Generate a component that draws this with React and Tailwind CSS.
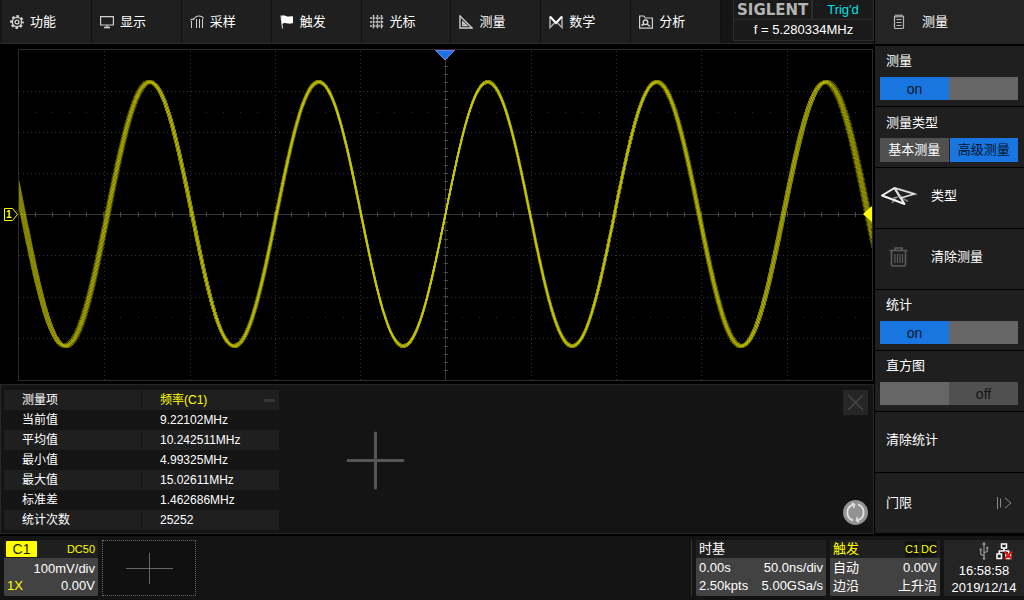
import { useState } from "react";
import { Usb } from "lucide-react";
import clsx from "clsx";

const navItems = [
  { label: "功能", icon: GearIcon },
  { label: "显示", icon: MonitorIcon },
  { label: "采样", icon: SampleIcon },
  { label: "触发", icon: FlagIcon },
  { label: "光标", icon: CursorGridIcon },
  { label: "测量", icon: SetSquareIcon },
  { label: "数学", icon: MathIcon },
  { label: "分析", icon: AnalysisIcon }
];

const stats = [
  { label: "当前值", value: "9.22102MHz" },
  { label: "平均值", value: "10.242511MHz" },
  { label: "最小值", value: "4.99325MHz" },
  { label: "最大值", value: "15.02611MHz" },
  { label: "标准差", value: "1.462686MHz" },
  { label: "统计次数", value: "25252" }
];

// plot geometry, in viewBox units
const plot = { left: 18, right: 872, top: 5, bottom: 336, cx: 445, cy: 170 };
const wave = { period: 169, amplitude: 132 };
const jitter = [-1, -0.75, -0.5, -0.25, 0, 0.25, 0.5, 0.75, 1];
const columns = [104, 190, 275, 360, 531, 616, 701, 787];
const rows = [47, 88, 129, 211, 253, 294];

// every pass drifts a little in time and carries some vertical noise
function wavePath(spread, index) {
  const noise = ((index % 3) - 1) * 1.2;
  const points = [];
  for (let x = plot.left; x <= plot.right; x += 1) {
    const phase = ((x - plot.cx - 0.5) * (1 + spread * 0.0062) * 2 * Math.PI) / wave.period;
    points.push(`${x},${(plot.cy + noise - wave.amplitude * Math.sin(phase)).toFixed(1)}`);
  }
  return `M${points.join("L")}`;
}

const wavePaths = jitter.map(wavePath);

export default function App() {
  return (
    <div lang="zh-CN" className="flex min-h-screen flex-col bg-black font-['Liberation_Sans','Noto_Sans_CJK_SC',sans-serif] text-[13px] leading-4 text-white">
      <div className="flex">
        <main className="min-w-0 flex-1">
          <TopBar />
          <Waveform />
          <StatsPanel />
        </main>
        <Sidebar />
      </div>
      <StatusBar />
    </div>
  );
}

function TopBar() {
  return (
    <header className="flex h-11 border-b border-[#2b2b2b] bg-[#151515] pl-0.5">
      <nav className="flex flex-1">
        {navItems.map((item) => {
          const Icon = item.icon;
          return (
            <button key={item.label} type="button" className="flex flex-1 items-center gap-1.5 border-r border-[#111111] bg-[#1f1f1f] pl-2">
              <Icon />
              <span>{item.label}</span>
            </button>
          );
        })}
      </nav>
      <div className="ml-3 h-[41px] w-[141px] border border-t-0 border-[#2d2d2d] bg-[#1a1a1a]">
        <div className="flex h-5 border-b border-[#2d2d2d]">
          <div className="flex w-[79px] items-center border-r-2 border-[#2d2d2d] pl-[3px] font-['DejaVu_Sans',sans-serif] text-[15px] font-bold text-[#b4b4b4]">SIGLENT</div>
          <div className="flex flex-1 items-center justify-center text-[#00e5e5]">Trig'd</div>
        </div>
        <div className="flex h-5 items-center justify-center">f = 5.280334MHz</div>
      </div>
    </header>
  );
}

function Waveform() {
  const hTicks = Array.from({ length: 49 }, (_, i) => Math.round(plot.cx + (i - 24) * 17.08));
  const vTicks = Array.from({ length: 39 }, (_, i) => Math.round(plot.cy + (i - 19) * 8.23));
  return (
    <svg viewBox="0 0 874 340" className="block h-auto w-full" role="img" aria-label="C1 波形">
      <defs>
        <clipPath id="plot-area">
          <rect x="19" y="6" width="853" height="330" />
        </clipPath>
      </defs>
      <g shapeRendering="crispEdges" fill="none" stroke="#343434">
        <rect x="18.5" y="5.5" width="854" height="331" stroke="#2c2c2c" />
        {columns.map((x) => (
          <line key={x} x1={x + 0.5} x2={x + 0.5} y1="7" y2="336" strokeDasharray="1 3" />
        ))}
        {rows.map((y) => (
          <line key={y} x1="19" x2="870" y1={y + 0.5} y2={y + 0.5} strokeDasharray="1 3" />
        ))}
        <path d="M19 170.5H872M445.5 6V336" />
        {hTicks.map((x) => (
          <path key={x} d={`M${x + 0.5} 168v5`} stroke="#484848" />
        ))}
        {vTicks.map((y) => (
          <path key={y} d={`M444 ${y + 0.5}h4`} stroke="#484848" />
        ))}
        {hTicks.map((x) => (
          <path key={x} d={`M${x} 68.5h1M${x} 273.5h1`} stroke="#2c2c2c" />
        ))}
      </g>
      <g clipPath="url(#plot-area)" fill="none" stroke="#d8d800" strokeWidth="2" strokeOpacity="0.27" shapeRendering="crispEdges">
        {wavePaths.map((d, index) => (
          <path key={jitter[index]} d={d} />
        ))}
      </g>
      <path d="M435.5 6.5h19l-9.500 9.500z" fill="#1976e0" stroke="#8074e8" />
      <path d="M863 170l9-8v16z" fill="#ffff00" />
      <path d="M4.500 164.500h8l5 6-5 6h-8z" fill="#000000" stroke="#ffff00" />
      <text x="6" y="174" fill="#ffff00" fontSize="10" fontWeight="bold">1</text>
    </svg>
  );
}

function StatsPanel() {
  return (
    <section className="flex h-[150px] border border-[#272727] bg-[#141414] pt-[5px] pr-[5px] pl-[3px]">
      <table className="h-[140px] w-[275px] table-fixed border-collapse text-left text-[12px]">
        <thead>
          <tr className="h-5 bg-[#1f1f1f]">
            <th scope="col" className="border-r border-[#141414] p-0 pl-[18px] font-normal">测量项</th>
            <th scope="col" className="p-0 pl-[18px] font-normal text-[#ffff00]">
              <div className="flex items-center justify-between">
                频率(C1)
                <button type="button" aria-label="移除 频率(C1)" className="mr-1 h-[3px] w-[11px] rounded-full bg-[#383838]" />
              </div>
            </th>
          </tr>
        </thead>
        <tbody>
          {stats.map((item) => (
            <tr key={item.label} className="h-5 even:bg-[#1f1f1f]">
              <th scope="row" className="border-r border-[#141414] p-0 pl-[18px] font-normal">{item.label}</th>
              <td className="p-0 pl-[18px]">{item.value}</td>
            </tr>
          ))}
        </tbody>
      </table>
      <button type="button" aria-label="添加测量项" className="ml-[66px] self-center pb-1">
        <svg width="60" height="60" viewBox="0 0 60 60" fill="none" stroke="#555555" strokeWidth="3" strokeLinecap="round">
          <path d="M3 30.500h55M30.500 3v55" />
        </svg>
      </button>
      <div className="ml-auto flex flex-col items-center justify-between pb-2">
        <button type="button" aria-label="关闭" className="grid h-[25px] w-[25px] place-items-center bg-[#262626]">
          <svg width="17" height="17" viewBox="0 0 17 17" stroke="#464646" strokeWidth="1.500">
            <path d="M1 1l15 15M16 1L1 16" />
          </svg>
        </button>
        <button type="button" aria-label="重新统计" className="grid h-[25px] w-[25px] place-items-center rounded-full bg-[#929292]">
          <svg width="21" height="21" viewBox="0 0 21 21" fill="none" stroke="#e2e2e2" strokeWidth="1.800">
            <path d="M8 18.300A8.200 8.200 0 0 1 8.500 2.600M13 2.700A8.200 8.200 0 0 1 12.500 18.400" />
            <path d="M7 0.800l2.500 1.800L8.500 6M14 20.200l-2.500-1.800L12.500 15" strokeWidth="1.500" />
          </svg>
        </button>
      </div>
    </section>
  );
}

function Sidebar() {
  const [type, setType] = useState("高级测量");
  return (
    <aside className="w-[150px] shrink-0 border-l border-black bg-[#1f1f1f]">
      <h2 className="flex h-[46px] items-center gap-4 border-b-2 border-black bg-[#242424] pl-[17px]">
        <NotepadIcon />
        测量
      </h2>
      <Switch label="测量" defaultChecked />
      <fieldset className="h-[61px] border-b border-black pt-1.5 pr-1.5 pl-[5px]">
        <legend className="float-left w-full pl-1.5 leading-5">测量类型</legend>
        <div className="flex w-full gap-px pt-[5px]">
          {["基本测量", "高级测量"].map((name) => (
            <label key={name} className={clsx("relative grid h-6 flex-1 place-items-center", type === name ? "bg-[#1976e0] text-[#04152b]" : "bg-[#505050]")}>
              <input type="radio" name="measure-type" className="sr-only" checked={type === name} onChange={() => setType(name)} />
              {name}
            </label>
          ))}
        </div>
      </fieldset>
      <button type="button" className="flex h-[61px] w-full items-center border-b border-black pb-1 pl-[5px] text-left">
        <span className="w-[51px]"><TypeIcon /></span>
        类型
      </button>
      <button type="button" className="flex h-[61px] w-full items-center border-b border-black pb-1 pl-[5px] text-left">
        <span className="w-[51px] pl-[9px]"><TrashIcon /></span>
        清除测量
      </button>
      <Switch label="统计" defaultChecked />
      <Switch label="直方图" />
      <button type="button" className="flex h-[61px] w-full items-center border-b border-black pb-1 pl-[11px] text-left">清除统计</button>
      <button type="button" className="flex h-[61px] w-full items-center justify-between border-b border-black pr-3 pl-[11px] text-left">
        门限
        <svg width="15" height="14" viewBox="0 0 15 14" fill="none" stroke="#8a8a8a">
          <path d="M0.500 1v12M3.500 2.500v9M8 2l6 5-6 5" />
        </svg>
      </button>
    </aside>
  );
}

function Switch({ label, defaultChecked = false }) {
  const [on, setOn] = useState(defaultChecked);
  return (
    <label className="relative block h-[61px] border-b border-black pt-[5px] pr-1.5 pl-[5px]">
      <span className="block pl-1.5 leading-5">{label}</span>
      <input type="checkbox" className="sr-only" checked={on} onChange={(event) => setOn(event.target.checked)} />
      <span className="mt-1.5 grid h-[23px] grid-cols-2 text-[14px]">
        <span className={clsx("grid place-items-center", on ? "bg-[#1976e0] text-[#04152b]" : "bg-[#666666]")}>{on ? "on" : ""}</span>
        <span className={clsx("grid place-items-center", on ? "bg-[#666666]" : "bg-[#505050] text-[#161616]")}>{on ? "" : "off"}</span>
      </span>
    </label>
  );
}

function StatusBar() {
  return (
    <footer className="flex h-[66px] gap-1 border-t-2 border-black bg-[#141414] pt-1 pb-1 pl-1">
      <button type="button" className="flex w-[94px] flex-col rounded-[2px] bg-[#424242] text-left">
        <span className="flex h-[18px] w-full items-center justify-between bg-[#1f1f1f] pr-[3px]">
          <span className="ml-0.5 grid h-4 w-[31px] place-items-center rounded-[1px] bg-[#ffff00] text-[14px] text-[#222200]">C1</span>
          <span className="text-[11px] text-[#ffff00]">DC50</span>
        </span>
        <span className="block w-full pt-0.5 pr-[3px] text-right leading-[18px]">100mV/div</span>
        <span className="flex w-full justify-between pr-[3px] pl-[3px]">
          <span className="text-[#ffff00]">1X</span>
          <span>0.00V</span>
        </span>
      </button>
      <button type="button" aria-label="添加通道" className="grid w-[94px] place-items-center border border-dotted border-[#6a6a6a] bg-[#101010]">
        <svg width="47" height="31" viewBox="0 0 47 31" stroke="#666666" shapeRendering="crispEdges">
          <path d="M0 15.500h47M23.500 0v31" />
        </svg>
      </button>
      <div className="ml-auto w-[5px] border-l border-[#333333]" />
      <InfoBox title="时基" className="-ml-1 w-[130px]" lines={[["0.00s", "50.0ns/div"], ["2.50kpts", "5.00GSa/s"]]} />
      <InfoBox title="触发" className="w-[110px]" accent badges={["C1", "DC"]} lines={[["自动", "0.00V"], ["边沿", "上升沿"]]} />
      <div className="flex w-20 flex-col items-center bg-[#242424] text-center">
        <div className="flex h-[22px] items-center gap-1 pl-5">
          <Usb size={16} className="-rotate-45 text-[#8c8c8c]" strokeWidth={2} />
          <NetworkIcon />
        </div>
        <time className="leading-[17px]">16:58:58</time>
        <time className="leading-[17px]">2019/12/14</time>
      </div>
    </footer>
  );
}

function InfoBox({ title, className, lines, badges = [], accent = false }) {
  return (
    <button type="button" className={clsx("flex flex-col rounded-[2px] bg-[#424242] text-left", className)}>
      <span className="flex h-[18px] w-full items-center gap-0.5 bg-[#1f1f1f] px-[3px]">
        <span className={clsx("mr-auto", accent && "text-[#ffff00]")}>{title}</span>
        {badges.map((badge) => (
          <span key={badge} className="rounded-[2px] bg-[#111111] text-[11px] text-[#ffff00]">{badge}</span>
        ))}
      </span>
      {lines.map(([left, right]) => (
        <span key={left} className="flex w-full justify-between px-[3px] pt-0.5">
          <span>{left}</span>
          <span>{right}</span>
        </span>
      ))}
    </button>
  );
}

function NavIcon({ children }) {
  return (
    <svg width="14" height="14" viewBox="0 0 14 14" fill="none" stroke="#d0d0d0" strokeWidth="1.200" className="shrink-0">
      {children}
    </svg>
  );
}

function GearIcon() {
  return (
    <NavIcon>
      <circle cx="7" cy="7" r="5.800" strokeWidth="2.200" strokeDasharray="2.600 1.955" strokeDashoffset="1.300" />
      <circle cx="7" cy="7" r="4.600" strokeWidth="1.400" />
      <circle cx="7" cy="7" r="1.900" strokeWidth="1.400" />
    </NavIcon>
  );
}

function MonitorIcon() {
  return (
    <NavIcon>
      <path d="M0.600 1.600h12.800v8.400H0.600zM7 10v2.400" />
      <path d="M4 12.500h6" strokeWidth="1.600" />
    </NavIcon>
  );
}

function SampleIcon() {
  return (
    <NavIcon>
      <path d="M0.500 5.500Q1.500 3.500 3.500 4.500Q5.500 1 9 1T13.500 3.500" />
      <path d="M1.500 6v7M6.500 4v9M9.500 4v9M12.500 4v9" strokeWidth="1" />
    </NavIcon>
  );
}

function FlagIcon() {
  return (
    <NavIcon>
      <path d="M1 0.500l1.500 13" />
      <path d="M1.200 1C4-0.500 5 1 7 1.500S11 0.500 13 1.500V8.500C11 8 10 9 8 8.500S4 7.500 2 9z" fill="#ffffff" stroke="none" />
    </NavIcon>
  );
}

function CursorGridIcon() {
  return (
    <NavIcon>
      <path d="M3.500 0v14M7.500 0v14M11.500 0v14" strokeWidth="1.400" strokeDasharray="2 0.800" />
      <path d="M0 3h14M0 7h14M0 11h14" strokeWidth="1.400" strokeDasharray="2 0.800" />
    </NavIcon>
  );
}

function SetSquareIcon() {
  return (
    <NavIcon>
      <path d="M1 1v12h12zM3.800 7v3.500h3.800z" strokeWidth="1.400" />
    </NavIcon>
  );
}

function MathIcon() {
  return (
    <NavIcon>
      <path d="M1 1.500v11L5.500 8M13 1.500v11L8.500 8" stroke="#a8a8a8" strokeWidth="1.600" />
      <path d="M1 1.500L7 8l6-6.500" strokeWidth="2" stroke="#ffffff" />
    </NavIcon>
  );
}

function AnalysisIcon() {
  return (
    <NavIcon>
      <path d="M0.600 13.200V1h4.200l1.500 2h7.100v10.200z" />
      <circle cx="6.500" cy="7.300" r="2.300" strokeWidth="1.400" />
      <path d="M8 9l3 2.500M2.500 10.500l2.500-1.500" strokeWidth="1.500" />
    </NavIcon>
  );
}

function NotepadIcon() {
  return (
    <svg width="14" height="16" viewBox="0 0 14 16" fill="none" stroke="#b8b8b8" strokeWidth="1.200">
      <rect x="2.500" y="2" width="9" height="12.500" rx="1" />
      <path d="M4.500 5.500h5M4.500 8.500h5M4.500 11.500h5M4 0.500v3M6 0.500v3M8 0.500v3M10 0.500v3" />
    </svg>
  );
}

function TypeIcon() {
  return (
    <svg width="38" height="20" viewBox="0 0 38 20" fill="none" strokeLinejoin="round">
      <path d="M15 2L37 8.500M12 17l4-5M22 12l6 3.500" stroke="#777777" strokeWidth="2" />
      <path d="M14.500 2L2 9.500L24.500 18z" stroke="#f4f4f4" strokeWidth="2" />
      <path d="M14.500 2L34.500 8L20.500 12z" stroke="#dddddd" strokeWidth="1.800" />
      <path d="M13 12l9-2" stroke="#aaaaaa" strokeWidth="1.200" />
    </svg>
  );
}

function TrashIcon() {
  return (
    <svg width="19" height="20" viewBox="0 0 19 20" fill="none" stroke="#5c5c5c" strokeWidth="1.600">
      <path d="M0.500 3.500h18M6 3.500V1h7v2.500M2.500 4v13.500q0 1.500 1.500 1.500h11q1.500 0 1.500-1.500V4" />
      <path d="M6 7v9M8.500 7v9M11 7v9M13.500 7v9" strokeWidth="1.200" />
    </svg>
  );
}

function NetworkIcon() {
  return (
    <svg width="17" height="17" viewBox="0 0 17 17" fill="none" stroke="#ffffff" strokeWidth="1.500">
      <path d="M5.500 1h5v4h-5zM1 11h4.500v4.500H1zM10 11h4.500v4.500H10zM8 5v3M3.300 11V8h9.400v3" />
      <path d="M8.500 8.500l7.500 7.500M16 8.500L8.500 16" stroke="#e01010" strokeWidth="2" />
    </svg>
  );
}
